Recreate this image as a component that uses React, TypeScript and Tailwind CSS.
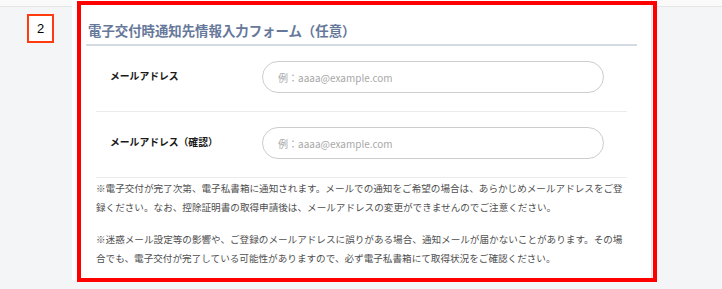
import React from "react";

const jp = { fontFamily: '"Noto Sans CJK JP", "Noto Sans", sans-serif' };

function Row({ label }: { label: string }) {
  return (
    <div className="flex items-center pt-[15px] pb-[18px] border-b border-[#ebebeb]">
      <div className="w-[166px] pl-[14px] text-[9.8px] font-bold text-[#1a1a1a] leading-none">{label}</div>
      <input
        type="email"
        placeholder="例：aaaa@example.com"
        className="w-[342px] h-[32px] rounded-full border border-[#cdcdcd] bg-white pl-[15px] text-[10px] text-[#333] placeholder:text-[#a8a8a8] outline-none"
        style={jp}
      />
    </div>
  );
}

export default function App() {
  return (
    <div className="relative w-[722px] h-[289px] bg-[#f4f5f7] overflow-hidden flex" style={jp}>
      <div className="w-[72px] flex flex-col">
        <div className="h-[7px] bg-[#fafafa] border-b border-[#e6e6e6]" />
        <div
          className="ml-[27px] mt-[7px] w-[27px] h-[29px] border-2 border-[#ff3b0f] bg-white flex items-center justify-center text-[13px] text-black"
          style={{ fontFamily: '"Liberation Sans", Arial, sans-serif' }}
        >
          2
        </div>
      </div>

      <div className="w-[580px] h-[280px] bg-white border-r border-[#e6e6e6] flex flex-col">
        <div className="ml-[14px] w-[551px] pl-[2px] pt-[21px] pb-[5px] border-b-2 border-[#d5dbe3]">
          <h2 className="text-[13.4px] leading-[18px] font-bold text-[#66789a]">
            電子交付時通知先情報入力フォーム（任意）
          </h2>
        </div>

        <div className="ml-[24px] w-[531px] flex flex-col">
          <Row label="メールアドレス" />
          <Row label="メールアドレス（確認）" />

          <div className="pt-[1px] text-[9.6px] leading-[19px] text-[#4f4f4f]">
            <p>
              <span className="block whitespace-nowrap">
                ※電子交付が完了次第、電子私書箱に通知されます。メールでの通知をご希望の場合は、あらかじめメールアドレスをご登
              </span>
              <span className="block whitespace-nowrap">
                録ください。なお、控除証明書の取得申請後は、メールアドレスの変更ができませんのでご注意ください。
              </span>
            </p>
            <p className="mt-[13px]">
              <span className="block whitespace-nowrap">
                ※迷惑メール設定等の影響や、ご登録のメールアドレスに誤りがある場合、通知メールが届かないことがあります。その場
              </span>
              <span className="block whitespace-nowrap">
                合でも、電子交付が完了している可能性がありますので、必ず電子私書箱にて取得状況をご確認ください。
              </span>
            </p>
          </div>
        </div>
      </div>

      <div className="flex-1 flex flex-col">
        <div className="h-[7px] bg-[#fafafa] border-b border-[#e6e6e6]" />
      </div>

      <div className="absolute left-[77px] top-[1px] w-[580px] h-[281px] border-4 border-[#ff0000] pointer-events-none" />
    </div>
  );
}
